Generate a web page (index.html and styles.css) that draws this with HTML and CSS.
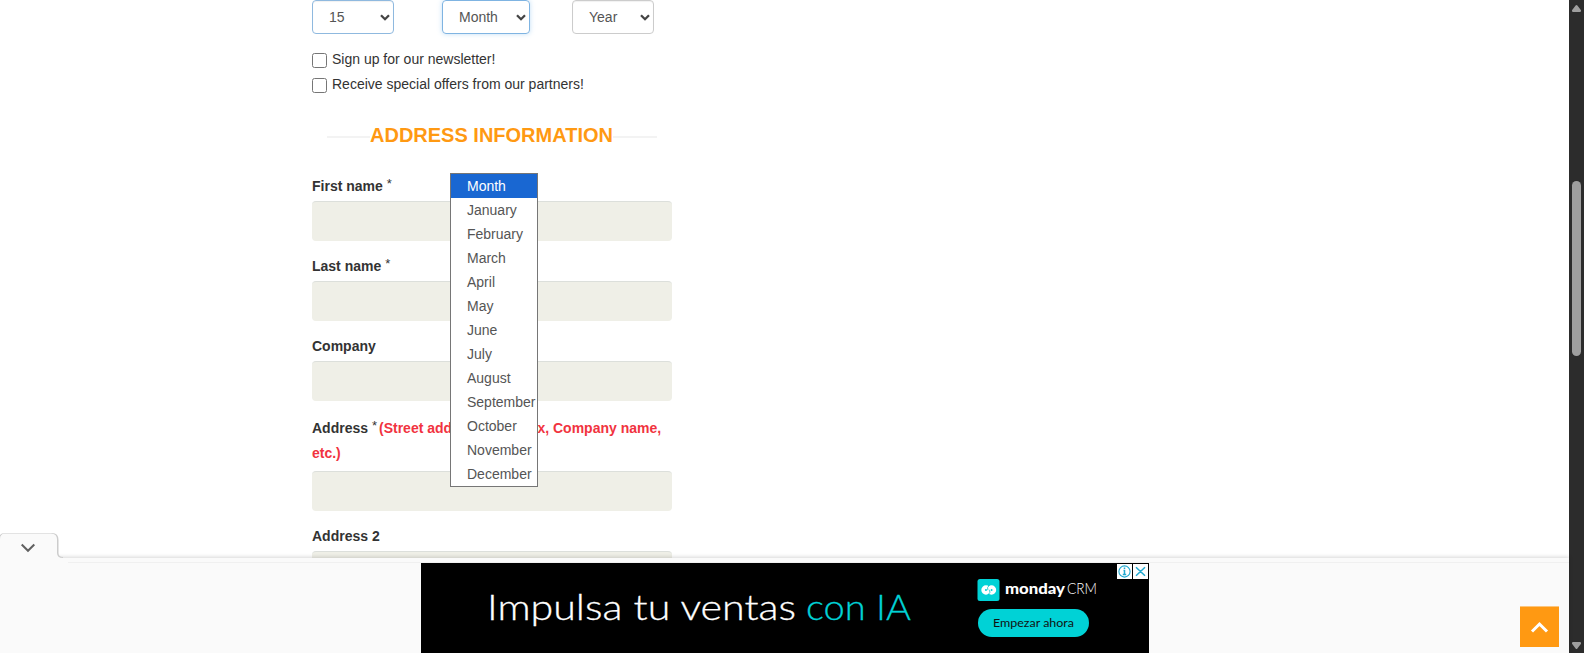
FILE: index.html
```html
<!DOCTYPE html>
<html lang="en">
<head>
<meta charset="utf-8">
<title>Create an account</title>
<link rel="stylesheet" href="styles.css">
</head>
<body>
<div class="window">
  <main class="page">
    <form class="form">
      <div class="dates">
        <div class="select day">15<svg class="caret" viewBox="0 0 10 7"><path d="M1 1.200l4 4 4-4"/></svg></div>
        <div class="select month">Month<svg class="caret" viewBox="0 0 10 7"><path d="M1 1.200l4 4 4-4"/></svg>
          <ul class="options">
            <li class="active">Month</li><li>January</li><li>February</li><li>March</li><li>April</li><li>May</li><li>June</li><li>July</li><li>August</li><li>September</li><li>October</li><li>November</li><li>December</li>
          </ul>
        </div>
        <div class="select year">Year<svg class="caret" viewBox="0 0 10 7"><path d="M1 1.200l4 4 4-4"/></svg></div>
      </div>
      <div class="checks">
        <label class="check"><span class="box"></span>Sign up for our newsletter!</label>
        <label class="check"><span class="box"></span>Receive special offers from our partners!</label>
      </div>
      <h3 class="heading"><span>ADDRESS INFORMATION</span></h3>
      <div class="field"><div class="label">First name <sup>*</sup></div><div class="input"></div></div>
      <div class="field"><div class="label">Last name <sup>*</sup></div><div class="input"></div></div>
      <div class="field"><div class="label">Company</div><div class="input"></div></div>
      <div class="field address"><div class="label">Address <sup>*</sup><span class="hint">(Street address, P.O. Box, Company name, etc.)</span></div><div class="input"></div></div>
      <div class="field"><div class="label">Address 2</div><div class="input"></div></div>
    </form>
  </main>
  <div class="scrollbar">
    <svg width="16" height="653" viewBox="0 0 16 653">
      <path fill="#9f9f9f" d="M6.600 5.600Q7.500 4.400 8.400 5.600L12 10.300Q12.400 12 11 12H4Q2.600 12 3 10.300Z"/>
      <rect x="3" y="181" width="9" height="175" rx="4.500" fill="#9f9f9f"/>
      <path fill="#9f9f9f" d="M6.600 648.400Q7.500 649.600 8.400 648.400L12 643.700Q12.400 642 11 642H4Q2.600 642 3 643.700Z"/>
    </svg>
  </div>
  <div class="anchor">
    <svg class="tab" width="68" height="32" viewBox="0 0 68 32">
      <path class="tab-shade" d="M0 8Q0 3 5 3H52Q57.500 3 57.500 9V22Q57.500 27 63 27"/>
      <path class="tab-fill" d="M0 8Q0 2.500 5 2.500H51Q57 2.500 57 8.500V22Q57 27 63 27H68V32H0Z"/>
      <path class="tab-arrow" d="M21.700 13.500L28 19.800L34.300 13.500"/>
    </svg>
    <div class="strip"></div>
    <div class="ad">
      <svg width="728" height="90" viewBox="0 0 728 90">
        <g class="headline">
          <text x="66" y="57" textLength="309" lengthAdjust="spacingAndGlyphs">Impulsa tu ventas</text>
          <text class="cyan" x="385" y="57" textLength="105" lengthAdjust="spacingAndGlyphs">con IA</text>
        </g>
        <rect x="556.500" y="16" width="22" height="22" rx="2.500" fill="#00d2d6"/>
        <g fill="none" stroke="#fff" stroke-width="3.600">
          <circle cx="565" cy="27" r="2.900"/><circle cx="570.500" cy="27" r="2.900"/>
        </g>
        <path d="M568.500 22q-3 2.500-1.600 5.200M567 32q3-2.500 1.600-5.200" fill="none" stroke="#00c8cd" stroke-width=".8"/>
        <text class="brand" x="584" y="31" textLength="60" lengthAdjust="spacingAndGlyphs">monday</text>
        <text class="crm" x="646" y="31" textLength="30" lengthAdjust="spacingAndGlyphs">CRM</text>
        <rect x="557" y="46" width="111" height="28" rx="14" fill="#00d2d6"/>
        <text class="cta" x="572" y="64" textLength="81" lengthAdjust="spacingAndGlyphs">Empezar ahora</text>
        <path fill="#fff" d="M696 1h15v15h-15zM712 1h15v15h-15z"/>
        <g fill="none" stroke="#20a9d0" stroke-width="1.500">
          <circle cx="703.500" cy="8.500" r="5.600" stroke-width="1.100"/>
          <path d="M703.500 4.500v1.500M702.500 7.500h1v4M701.800 11.600h3.400M715 4.200l9 8.600M724 4.200l-9 8.600"/>
        </g>
      </svg>
    </div>
  </div>
  <div class="to-top"><svg width="39" height="40" viewBox="0 0 39 40"><path d="M12 24.500L19.500 17L27 24.500"/></svg></div>
</div>
</body>
</html>
```
FILE: styles.css
```css
* { box-sizing: border-box; }
body { margin: 0; overflow: hidden; background: #fff; font: 14px/25px "Liberation Sans", Arial, sans-serif; color: #333; }
.window { position: relative; display: flex; width: 1584px; height: 653px; overflow: hidden; }
.page { flex: 1; padding-left: 312px; }
.form { width: 360px; }
.dates { display: flex; height: 34px; }
.select { position: relative; display: flex; align-items: center; justify-content: space-between; width: 82px; height: 34px; padding: 0 3px 0 16px; border: 1px solid #ccc; border-radius: 4px; color: #555; box-shadow: inset 0 1px 1px rgba(0,0,0,.06); }
.day { border-color: #8fb9df; }
.month { width: 88px; margin: 0 42px 0 48px; border-color: #7fb4e2; box-shadow: 0 0 5px rgba(102,175,233,.4); }
.caret { width: 10px; height: 7px; fill: none; stroke: #444; stroke-width: 2.3; }
.options { position: absolute; z-index: 2; left: 7px; top: 172px; width: 88px; margin: 0; padding: 0; list-style: none; background: #fff; border: 1px solid #767676; line-height: 24px; }
.options li { height: 24px; padding-left: 16px; }
.options .active { background: #1967d2; color: #fff; }
.checks { padding-top: 13px; }
.check { display: flex; height: 25px; gap: 5px; }
.box { width: 15px; height: 15px; margin-top: 6px; border: 1px solid #767676; border-radius: 2.5px; }
.heading { display: flex; align-items: center; height: 26px; margin: 25px 15px 24px; color: #ff9912; font-size: 20px; line-height: 26px; white-space: nowrap; }
.heading::before, .heading::after { content: ""; height: 2px; margin-top: 4px; background: #f3f3f3; }
.heading::before { width: 43px; }
.heading::after { flex: 1; }
.field { height: 80px; }
.label { height: 29px; padding-top: 2px; font-weight: bold; }
.address { height: 110px; }
.address .label { height: 59px; padding-top: 4px; }
sup { font-size: 13px; font-weight: normal; line-height: 0; vertical-align: 3px; }
.label sup { letter-spacing: -1px; }
.hint { margin-left: 3px; color: #f13340; }
.input { height: 40px; border-radius: 4px; background: #efefe7; border-top: 1px solid #dcdfdb; }
.scrollbar { width: 15px; background: #2c2c2c; overflow: hidden; }
.anchor { position: absolute; left: 0; top: 558px; width: 1569px; height: 95px; background: #fafafa; box-shadow: 0 -1px 4px rgba(0,0,0,.16); }
.tab { position: absolute; left: 0; top: -27px; }
.tab-fill { fill: #fafafa; }
.tab-shade { fill: none; stroke: #ccc; stroke-width: 2; }
.tab-arrow { fill: none; stroke: #616161; stroke-width: 2; }
.strip { height: 5px; border-bottom: 1px solid #f0f0f0; }
.ad { width: 728px; height: 90px; margin-left: 421px; background: #000; }
.ad svg { display: block; }
.headline { font: 300 36px Lato, sans-serif; fill: #fff; stroke: #fff; stroke-width: .3px; }
.headline .cyan { fill: #00d2d6; stroke: #00d2d6; }
.brand { font: 900 15px Lato, sans-serif; fill: #fff; }
.crm { font: 300 15px Lato, sans-serif; fill: #fff; }
.cta { font: 400 11px Lato, sans-serif; fill: #111; }
.to-top { position: absolute; left: 1520px; top: 606px; width: 39px; height: 41px; background: #ff9912; border-top: 1px solid #fcc57c; }
.to-top svg { display: block; fill: none; stroke: #fff; stroke-width: 3; }
```
